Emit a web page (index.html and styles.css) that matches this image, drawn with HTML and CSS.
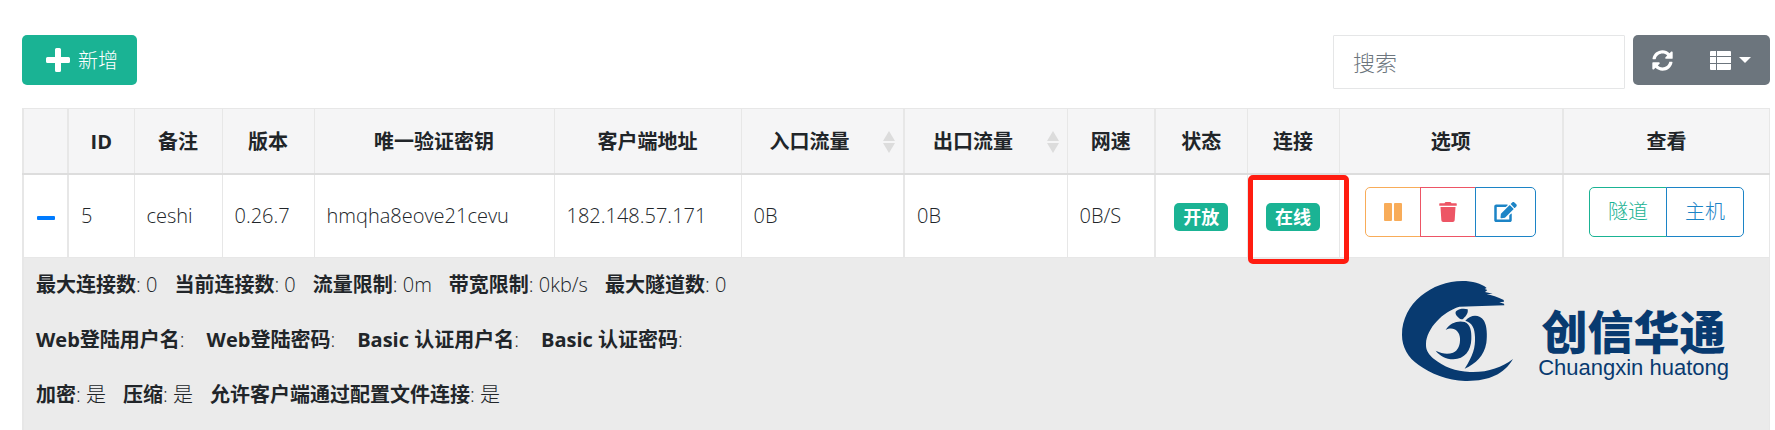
FILE: index.html
```
<!DOCTYPE html>
<html lang="zh-CN">
<head>
    <meta charset="UTF-8">
    <meta name="viewport" content="width=device-width, initial-scale=1.0">
    <title>客户端列表</title>
    <link rel="stylesheet" href="styles.css">
</head>
<body>
    <div class="container">
        <div class="toolbar">
            <button type="button" class="btn btn-add">
                <svg class="icon icon-plus" viewBox="0 0 24 24" aria-hidden="true"><path d="M10.5 0h3A1.5 1.5 0 0 1 15 1.5V9h7.5A1.5 1.5 0 0 1 24 10.5v3A1.5 1.5 0 0 1 22.5 15H15v7.5A1.5 1.5 0 0 1 13.5 24h-3A1.5 1.5 0 0 1 9 22.5V15H1.5A1.5 1.5 0 0 1 0 13.5v-3A1.5 1.5 0 0 1 1.5 9H9V1.5A1.5 1.5 0 0 1 10.5 0z"/></svg>
                新增
            </button>
            <div class="toolbar-right">
                <input type="text" class="search" placeholder="搜索" aria-label="搜索">
                <div class="btn-group">
                    <button type="button" class="btn btn-tool" aria-label="刷新">
                        <svg class="icon icon-tool" viewBox="0 0 512 512" aria-hidden="true"><path d="M370.72 133.28C339.458 104.008 298.888 87.962 255.848 88c-77.458.068-144.328 53.178-162.791 126.85-1.344 5.363-6.122 9.15-11.651 9.15H24.103c-7.498 0-13.194-6.807-11.807-14.176C33.933 94.924 134.813 8 256 8c66.448 0 126.791 26.136 171.315 68.685L463.03 40.97C478.149 25.851 504 36.559 504 57.941V192c0 13.255-10.745 24-24 24H345.941c-21.382 0-32.09-25.851-16.971-40.971l41.75-41.749zM32 296h134.059c21.382 0 32.09 25.851 16.971 40.971l-41.75 41.75c31.262 29.273 71.835 45.319 114.876 45.28 77.418-.07 144.315-53.144 162.787-126.849 1.344-5.363 6.122-9.15 11.651-9.15h57.304c7.498 0 13.194 6.807 11.807 14.176C478.067 417.076 377.187 504 256 504c-66.448 0-126.791-26.136-171.315-68.685L48.97 471.03C33.851 486.149 8 475.441 8 454.059V320c0-13.255 10.745-24 24-24z"/></svg>
                    </button>
                    <button type="button" class="btn btn-tool" aria-label="列">
                        <svg class="icon icon-tool" viewBox="0 0 21 21" aria-hidden="true"><path d="M1 1h5v5H0V2a1 1 0 0 1 1-1zM7 1h13a1 1 0 0 1 1 1v4H7zM0 7h6v6H0zM7 7h14v6H7zM0 14h6v6H1a1 1 0 0 1-1-1zM7 14h14v5a1 1 0 0 1-1 1H7z"/></svg>
                        <span class="caret"></span>
                    </button>
                </div>
            </div>
        </div>

        <table class="client-table">
            <colgroup>
                <col class="col-toggle">
                <col class="col-id">
                <col class="col-short">
                <col class="col-mid">
                <col class="col-key">
                <col class="col-addr">
                <col class="col-flow">
                <col class="col-flow">
                <col class="col-short">
                <col class="col-mid">
                <col class="col-mid">
                <col class="col-option">
                <col class="col-view">
            </colgroup>
            <thead>
                <tr>
                    <th></th>
                    <th>ID</th>
                    <th>备注</th>
                    <th>版本</th>
                    <th>唯一验证密钥</th>
                    <th>客户端地址</th>
                    <th><div class="sortable">入口流量<span class="sort"></span></div></th>
                    <th><div class="sortable">出口流量<span class="sort"></span></div></th>
                    <th>网速</th>
                    <th>状态</th>
                    <th>连接</th>
                    <th>选项</th>
                    <th>查看</th>
                </tr>
            </thead>
            <tbody>
                <tr>
                    <td class="center"><a href="#" class="toggle" aria-label="收起"></a></td>
                    <td>5</td>
                    <td>ceshi</td>
                    <td>0.26.7</td>
                    <td>hmqha8eove21cevu</td>
                    <td>182.148.57.171</td>
                    <td>0B</td>
                    <td>0B</td>
                    <td>0B/S</td>
                    <td class="center"><span class="badge">开放</span></td>
                    <td class="center marked"><span class="badge">在线</span></td>
                    <td class="center actions">
                        <div class="btn-group">
                            <button type="button" class="btn btn-outline warning" aria-label="暂停">
                                <svg class="icon icon-pause" viewBox="0 0 18 18" aria-hidden="true"><path d="M1 0h6a1 1 0 0 1 1 1v16a1 1 0 0 1-1 1H1a1 1 0 0 1-1-1V1a1 1 0 0 1 1-1zM11 0h6a1 1 0 0 1 1 1v16a1 1 0 0 1-1 1h-6a1 1 0 0 1-1-1V1a1 1 0 0 1 1-1z"/></svg>
                            </button>
                            <button type="button" class="btn btn-outline danger" aria-label="删除">
                                <svg class="icon icon-trash" viewBox="0 0 448 512" aria-hidden="true"><path d="M432 32H312l-9.4-18.7A24 24 0 0 0 281.1 0H166.8a23.72 23.72 0 0 0-21.4 13.3L136 32H16A16 16 0 0 0 0 48v32a16 16 0 0 0 16 16h416a16 16 0 0 0 16-16V48a16 16 0 0 0-16-16zM53.2 467a48 48 0 0 0 47.9 45h245.8a48 48 0 0 0 47.9-45L416 128H32z"/></svg>
                            </button>
                            <button type="button" class="btn btn-outline info" aria-label="编辑">
                                <svg class="icon icon-edit" viewBox="0 0 576 512" aria-hidden="true"><path d="M402.6 83.2l90.2 90.2c3.8 3.8 3.8 10 0 13.8L274.4 405.6l-92.8 10.3c-12.4 1.4-22.9-9.1-21.5-21.5l10.3-92.8L388.8 83.2c3.8-3.8 10-3.8 13.8 0zm162-22.9l-48.8-48.8c-15.2-15.2-39.9-15.2-55.2 0l-35.4 35.4c-3.8 3.8-3.8 10 0 13.8l90.2 90.2c3.8 3.8 10 3.8 13.8 0l35.4-35.4c15.2-15.3 15.2-40 0-55.2zM384 346.2V448H64V128h229.8c3.2 0 6.2-1.3 8.5-3.5l40-40c7.6-7.6 2.2-20.5-8.5-20.5H48C21.5 64 0 85.5 0 112v352c0 26.5 21.5 48 48 48h352c26.5 0 48-21.5 48-48V306.2c0-10.7-12.9-16-20.5-8.5l-40 40c-2.2 2.3-3.5 5.3-3.5 8.5z"/></svg>
                            </button>
                        </div>
                    </td>
                    <td class="center actions">
                        <div class="btn-group">
                            <button type="button" class="btn btn-outline primary">隧道</button>
                            <button type="button" class="btn btn-outline info">主机</button>
                        </div>
                    </td>
                </tr>
                <tr class="detail-row">
                    <td colspan="13">
                        <div class="detail">
                            <div class="detail-lines">
                                <p><span><b>最大连接数</b>: 0</span><span><b>当前连接数</b>: 0</span><span><b>流量限制</b>: 0m</span><span><b>带宽限制</b>: 0kb/s</span><span><b>最大隧道数</b>: 0</span></p>
                                <p class="wide"><span><b>Web登陆用户名</b>:</span><span><b>Web登陆密码</b>:</span><span><b>Basic 认证用户名</b>:</span><span><b>Basic 认证密码</b>:</span></p>
                                <p><span><b>加密</b>: 是</span><span><b>压缩</b>: 是</span><span><b>允许客户端通过配置文件连接</b>: 是</span></p>
                            </div>
                            <div class="logo">
                                <svg class="logo-mark" viewBox="24 16 333 300" aria-hidden="true">
                                    <path d="M278 37C262 23 235 16 205 16C115 16 24 82 24 178C24 214 42 246 74 268C110 294 166 317 220 316C286 315 330 296 357 250C322 276 280 291 228 289C184 287 150 274 120 250C104 236 95 224 96 204C98 158 146 108 196 93L331 89L330 84L316 80L330 78L329 73C312 65 292 58 278 56L296 54L273 49L280 43L272 40Z"/>
                                    <path d="M187 106C196 98 212 98 221 101C223 112 218 119 207 130C201 134 190 124 186 117C184 113 184 109 187 106Z"/>
                                    <path d="M155 163C168 141 192 134 212 139C229 145 233 166 232 190C231 225 212 250 178 251C155 251 138 241 125 225C145 235 162 236 177 231C193 225 199 207 198 188C197 164 176 151 155 163Z"/>
                                    <path d="M214 135C232 114 257 116 270 135C279 151 280 178 277 202C270 241 246 264 212 279C238 239 244 216 243 184C242 157 235 142 214 135Z"/>
                                </svg>
                                <div class="logo-text">
                                    <span class="logo-cn">创信华通</span>
                                    <span class="logo-en">Chuangxin huatong</span>
                                </div>
                            </div>
                        </div>
                    </td>
                </tr>
            </tbody>
        </table>
    </div>
</body>
</html>
```

FILE: styles.css
```
* {
    box-sizing: border-box;
}

body {
    margin: 0;
    font-family: "Open Sans", "Noto Sans CJK SC", sans-serif;
    font-size: 20px;
    font-weight: 300;
    line-height: 29px;
    color: #212529;
    background-color: #fff;
}

.container {
    padding: 35px 5px 0 22px;
}

.toolbar {
    display: flex;
    justify-content: space-between;
    align-items: flex-start;
    margin-bottom: 19px;
}

.toolbar-right {
    display: flex;
    align-items: flex-start;
    gap: 8px;
}

.search {
    width: 292px;
    height: 54px;
    padding: 0 19px;
    border: 1px solid #e5e6e7;
    border-radius: 1px;
    font: inherit;
    font-size: 22px;
    color: #212529;
}

.search::placeholder {
    color: #6c757d;
    opacity: 1;
}

/* buttons */
.btn {
    display: flex;
    align-items: center;
    justify-content: center;
    height: 50px;
    padding: 0 18px;
    border: 1px solid transparent;
    border-radius: 5px;
    font: inherit;
    color: #fff;
    cursor: pointer;
}

.btn-group {
    display: inline-flex;
    vertical-align: top;
}

.btn-group .btn:not(:first-child) {
    margin-left: -1px;
    border-top-left-radius: 0;
    border-bottom-left-radius: 0;
}

.btn-group .btn:not(:last-child) {
    border-top-right-radius: 0;
    border-bottom-right-radius: 0;
}

.btn-add {
    gap: 8px;
    padding: 0 18px 0 23px;
    background-color: #1ab394;
}

.btn-tool {
    gap: 8px;
    background-color: #6c757d;
}

.btn-outline {
    background-color: #fff;
    border-color: currentColor;
}

.primary {
    color: #1ab394;
}

.info {
    color: #1c84c6;
}

.warning {
    color: #f8ac59;
}

.danger {
    color: #ed5565;
}

.caret {
    border-top: 6px solid #fff;
    border-left: 6px solid transparent;
    border-right: 6px solid transparent;
}

/* icons */
.icon {
    display: block;
    fill: currentColor;
}

.icon-plus {
    width: 24px;
    height: 24px;
}

.icon-tool {
    width: 21px;
    height: 21px;
}

.icon-pause {
    width: 18px;
    height: 18px;
}

.icon-trash {
    width: 18px;
    height: 20px;
}

.icon-edit {
    width: 23px;
    height: 20px;
}

/* table */
.client-table {
    width: 100%;
    table-layout: fixed;
    border-collapse: collapse;
    border: 1px solid #e7e7e7;
    border-left-width: 2px;
}

.col-toggle { width: 45px; }
.col-id { width: 66px; }
.col-short { width: 88px; }
.col-mid { width: 92px; }
.col-key { width: 240px; }
.col-addr { width: 187px; }
.col-flow { width: 163px; }
.col-option { width: 224px; }

.client-table th,
.client-table td {
    padding: 12px;
    border: 1px solid #e7e7e7;
}

.client-table th {
    height: 65px;
    padding-top: 14px;
    border-bottom: 2px solid #ddd;
    background-color: #f5f5f6;
    font-weight: 700;
    text-align: center;
}

.client-table td {
    height: 83px;
    text-align: left;
}

.client-table th:nth-child(2),
.client-table td:nth-child(2),
.client-table th:nth-child(8),
.client-table td:nth-child(8),
.client-table th:nth-child(10),
.client-table td:nth-child(10),
.client-table th:nth-child(13),
.client-table td:nth-child(13) {
    border-left-width: 2px;
}

.client-table .center {
    padding: 12px 0;
    text-align: center;
}

.client-table .actions {
    padding-bottom: 20px;
}

.sortable {
    display: flex;
    justify-content: space-between;
    align-items: center;
    padding-left: 16px;
    margin-right: -4px;
}

.sort {
    display: flex;
    flex-direction: column;
    gap: 2px;
}

.sort::before,
.sort::after {
    content: "";
    border-left: 6px solid transparent;
    border-right: 6px solid transparent;
}

.sort::before {
    border-bottom: 10px solid #dcdcdc;
}

.sort::after {
    border-top: 10px solid #dcdcdc;
}

.toggle {
    display: inline-block;
    width: 18px;
    height: 4px;
    border-radius: 1px;
    background-color: #007bff;
    vertical-align: middle;
}

.badge {
    display: inline-block;
    padding: 0 9px;
    border-radius: 5px;
    background-color: #1ab394;
    color: #fff;
    font-size: 18px;
    font-weight: 700;
    line-height: 28px;
    vertical-align: middle;
}

/* red frame around the online state */
.marked {
    position: relative;
}

.marked::after {
    content: "";
    position: absolute;
    top: 0;
    right: -10px;
    bottom: -7px;
    left: 0;
    border: 5px solid #ff1c10;
    border-radius: 5px;
}

/* detail */
.detail-row {
    background-color: #ebebeb;
}

.detail {
    display: flex;
    justify-content: space-between;
    align-items: flex-start;
}

.detail p {
    display: flex;
    gap: 17px;
    margin: 0 0 26px;
}

.detail .wide {
    gap: 22px;
}

.detail b {
    font-weight: 700;
}

.logo {
    display: flex;
    align-items: flex-start;
    gap: 25px;
    padding: 11px 28px 0 0;
    color: #083a70;
}

.logo-mark {
    width: 111px;
    height: 100px;
    fill: currentColor;
}

.logo-text {
    display: flex;
    flex-direction: column;
    align-items: center;
    gap: 4px;
    padding-top: 24px;
}

.logo-cn {
    font-family: "Noto Sans CJK SC", sans-serif;
    font-size: 46px;
    font-weight: 900;
    line-height: 48px;
}

.logo-en {
    font-family: "Liberation Sans", sans-serif;
    font-size: 22px;
    font-weight: 400;
    line-height: 22px;
}
```
